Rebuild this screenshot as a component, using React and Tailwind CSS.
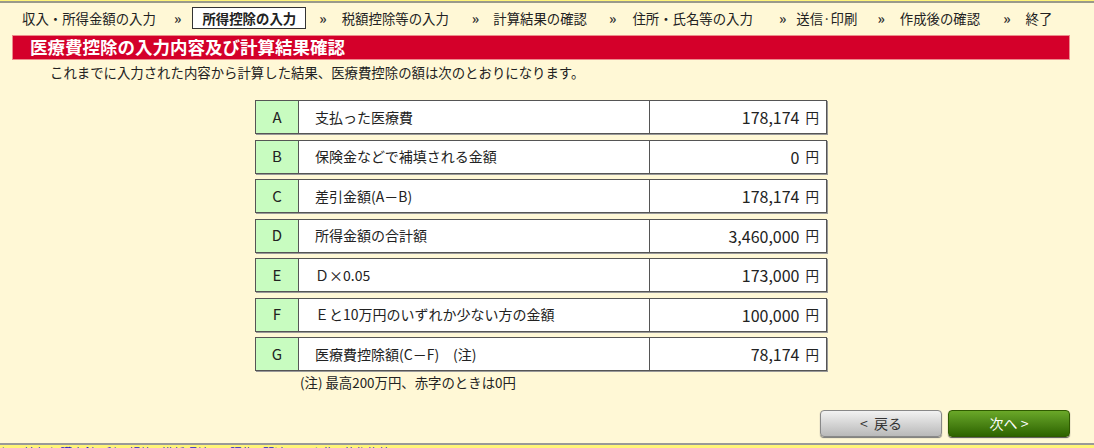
const font = { fontFamily: '"Noto Sans CJK JP", "Noto Sans", sans-serif' };

const steps = [
  { label: "収入・所得金額の入力", ml: "ml-[22px]" },
  { label: "所得控除の入力", ml: "ml-[11px]", active: true },
  { label: "税額控除等の入力", ml: "ml-[15px]" },
  { label: "計算結果の確認", ml: "ml-[14px]" },
  { label: "住所・氏名等の入力", ml: "ml-[16px]" },
  { label: "送信·印刷", ml: "ml-[10px]" },
  { label: "作成後の確認", ml: "ml-[15px]" },
  { label: "終了", ml: "ml-[15px]" },
];
const sepMl = ["ml-[18px]", "ml-[13px]", "ml-[23px]", "ml-[22px]", "ml-[26px]", "ml-[20px]", "ml-[23px]"];

const rows = [
  ["A", "支払った医療費", "178,174"],
  ["B", "保険金などで補填される金額", "0"],
  ["C", "差引金額(A－B)", "178,174"],
  ["D", "所得金額の合計額", "3,460,000"],
  ["E", "Ｄ×0.05", "173,000"],
  ["F", "Ｅと10万円のいずれか少ない方の金額", "100,000"],
  ["G", "医療費控除額(C－F)　(注)", "78,174"],
];

function StepNav() {
  return (
    <div className="mt-[3px] flex h-[24px] items-center text-[13.4px] text-[#222]">
      {steps.map((s, i) => (
        <div key={s.label} className="flex items-center">
          {s.active ? (
            <span className={`${s.ml} flex h-[22px] w-[114px] items-center justify-center border border-[#333] bg-white font-bold`}>
              {s.label}
            </span>
          ) : (
            <span className={s.ml}>{s.label}</span>
          )}
          {i < steps.length - 1 && (
            <span className={`${sepMl[i]} text-[14px] font-bold text-[#333]`}>»</span>
          )}
        </div>
      ))}
    </div>
  );
}

function ResultRow({ letter, label, value }) {
  return (
    <div className="flex h-[34px] border border-[#555] bg-white text-[14px] text-[#222] shadow-[1px_1px_0_#999]">
      <div className="flex w-[43px] items-center justify-center border-r border-[#555] bg-[#c8fcc0] text-[15px]">
        {letter}
      </div>
      <div className="flex flex-1 items-center border-r border-[#555] pl-[16px]">
        {label}
      </div>
      <div className="flex w-[176px] items-center justify-end pr-[7px] text-[16px]">
        {value}
        <span className="ml-[6px] text-[13.5px]">円</span>
      </div>
    </div>
  );
}

export default function App() {
  return (
    <div className="h-[448px] w-[1094px] overflow-hidden bg-[#fff8d6]" style={font}>
      <div className="h-[443px]">
        <div className="h-[3px] border-b-2 border-[#9a9a8a] bg-[#fff477]" />
        <StepNav />
        <div className="ml-[12px] mr-[24px] mt-[5px] flex h-[25px] items-center border border-[#ec8c8c] bg-[#d4002a] pl-[17px] text-[17.5px] font-bold text-white">
          医療費控除の入力内容及び計算結果確認
        </div>
        <p className="ml-[50px] mt-[2px] text-[13.4px] leading-[20px] text-[#222]">
          これまでに入力された内容から計算した結果、医療費控除の額は次のとおりになります。
        </p>
        <div className="ml-[255px] mt-[18px] flex w-[572px] flex-col gap-[5.5px]">
          {rows.map(([l, t, v]) => (
            <ResultRow key={l} letter={l} label={t} value={v} />
          ))}
        </div>
        <p className="ml-[300px] mt-[1px] text-[13.4px] leading-[20px] text-[#222]">
          (注) 最高200万円、赤字のときは0円
        </p>
        <div className="mr-[24px] mt-[18px] flex justify-end gap-[6px]">
          <button className="h-[27px] w-[122px] rounded-[4px] border border-[#888] bg-gradient-to-b from-[#f2f2f2] to-[#b9b9b9] text-[14px] text-[#333] shadow-[0_1px_1px_#777]">
            &lt;&nbsp;&nbsp;戻る
          </button>
          <button className="h-[27px] w-[122px] rounded-[4px] border border-[#2f5a00] bg-gradient-to-b from-[#6aa829] to-[#2e6400] text-[14px] text-white shadow-[0_1px_1px_#555]">
            次へ&nbsp;&gt;
          </button>
        </div>
      </div>
      <div className="flex justify-between border-t-2 border-[#999] bg-[#fff477] pt-[1px] text-[12px] leading-[14px]">
        <span className="text-[#2222cc]">個人情報保護方針 | 利用規約 | 推奨環境 | 用語集 | 関連リンク集 | 著作権等について</span>
        <span className="mr-[10px] text-[#222]">Copyright (c) 2016 NATIONAL TAX AGENCY All Rights Reserved.</span>
      </div>
    </div>
  );
}
